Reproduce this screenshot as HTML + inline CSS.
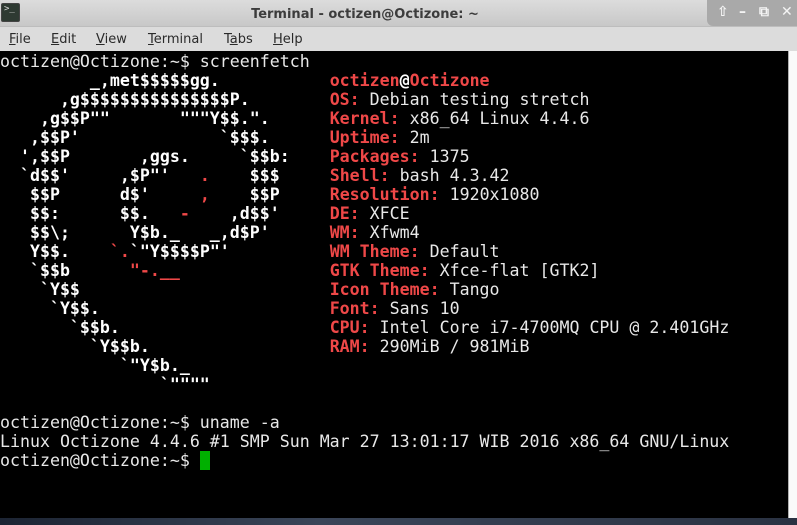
<!DOCTYPE html>
<html><head><meta charset="utf-8"><style>
*{margin:0;padding:0;box-sizing:border-box}
body{width:797px;height:525px;overflow:hidden;background:#000;position:relative;font-family:"DejaVu Sans","Liberation Sans",sans-serif}
#title{position:absolute;left:0;top:0;width:797px;height:27px;background:linear-gradient(#dcdcdc,#c8c8c8);border-bottom:1px solid #bdbdbd}
#title .t{position:absolute;left:0;width:730px;text-align:center;top:7px;font-size:13px;font-weight:bold;color:#3c3c3c}
#icon{position:absolute;left:1px;top:3px;width:19px;height:19px;border:1px solid #444;border-radius:2px;background:#2e3a32}
#icon span{position:absolute;left:2px;top:0;color:#ddd;font-size:9px;font-family:"DejaVu Sans Mono",monospace}
#btns{position:absolute;left:707px;top:0;width:90px;height:26px;background:#a9a9a9;border-radius:0 0 0 6px;color:#f4f4f4;font-size:14px;font-weight:bold}
#btns span{position:absolute;top:4px}
#menu{position:absolute;left:0;top:27px;width:797px;height:24px;background:#dcdcdc;font-size:13px;color:#2a2a2a}
#menu span{position:absolute;top:5px}
#term{position:absolute;left:0;top:51px;width:788px;height:467px;background:#000}
#sb{position:absolute;left:788px;top:51px;width:9px;height:467px;background:#fafafa;border-left:1px solid #b0b0b0}
pre{position:absolute;left:0;top:52px;font-family:"DejaVu Sans Mono","Liberation Mono",monospace;font-size:16.6px;line-height:19px;color:#e8e8e8;white-space:pre}
b{font-weight:bold;color:#fff}
.r{color:#ef4848;font-weight:bold}
.cur{display:inline-block;width:10px;height:19px;background:#00b000;vertical-align:top}
#desk{position:absolute;left:0;top:518px;width:797px;height:7px;background:linear-gradient(90deg,#1c2433,#3a4558 40%,#2a3242)}
</style></head><body>
<div id="title"><div id="icon"><span>&gt;_</span></div><div class="t">Terminal - octizen@Octizone: ~</div>
<div id="btns"><span style="left:10px">⇧</span><span style="left:32px">–</span><span style="left:52px">⧉</span><span style="left:74px">✕</span></div></div>
<div id="menu"><span style="left:9px"><u>F</u>ile</span><span style="left:51px"><u>E</u>dit</span><span style="left:96px"><u>V</u>iew</span><span style="left:148px"><u>T</u>erminal</span><span style="left:224px">T<u>a</u>bs</span><span style="left:273px"><u>H</u>elp</span></div>
<div id="term"></div><div id="sb"></div>
<pre>octizen@Octizone:~$ screenfetch
<b>         _,met$$$$$gg.           </b><span class="r">octizen</span><b>@</b><span class="r">Octizone</span>
<b>      ,g$$$$$$$$$$$$$$$P.        </b><span class="r">OS:</span> Debian testing stretch
<b>    ,g$$P""       """Y$$.".      </b><span class="r">Kernel:</span> x86_64 Linux 4.4.6
<b>   ,$$P'              `$$$.      </b><span class="r">Uptime:</span> 2m
<b>  ',$$P       ,ggs.     `$$b:    </b><span class="r">Packages:</span> 1375
<b>  `d$$'     ,$P"'   </b><span class="r">.</span><b>    $$$     </b><span class="r">Shell:</span> bash 4.3.42
<b>   $$P      d$'     </b><span class="r">,</span><b>    $$P     </b><span class="r">Resolution:</span> 1920x1080
<b>   $$:      $$.   </b><span class="r">-</span><b>    ,d$$'     </b><span class="r">DE:</span> XFCE
<b>   $$\;      Y$b._   _,d$P'      </b><span class="r">WM:</span> Xfwm4
<b>   Y$$.    </b><span class="r">`.</span><b>`"Y$$$$P"'          </b><span class="r">WM Theme:</span> Default
<b>   `$$b      </b><span class="r">"-.__</span><b>               </b><span class="r">GTK Theme:</span> Xfce-flat [GTK2]
<b>    `Y$$                         </b><span class="r">Icon Theme:</span> Tango
<b>     `Y$$.                       </b><span class="r">Font:</span> Sans 10
<b>       `$$b.                     </b><span class="r">CPU:</span> Intel Core i7-4700MQ CPU @ 2.401GHz
<b>         `Y$$b.                  </b><span class="r">RAM:</span> 290MiB / 981MiB
<b>            `"Y$b._</b>
<b>                `""""</b>

octizen@Octizone:~$ uname -a
Linux Octizone 4.4.6 #1 SMP Sun Mar 27 13:01:17 WIB 2016 x86_64 GNU/Linux
octizen@Octizone:~$ <span class="cur"></span></pre>
<div id="desk"></div>
</body></html>
